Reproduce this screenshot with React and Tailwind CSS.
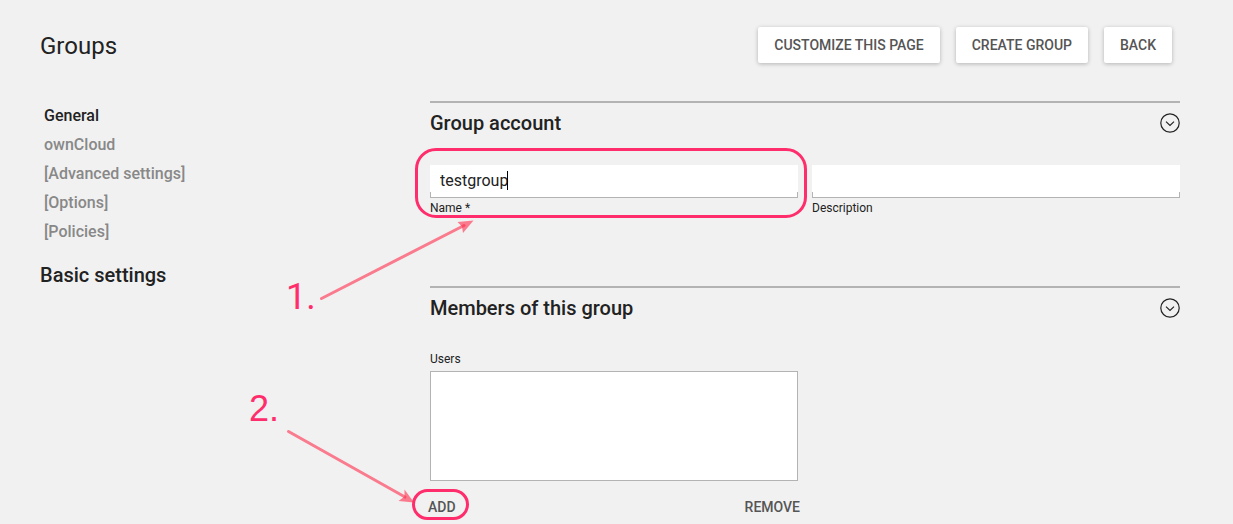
const navItems = ['General', 'ownCloud', '[Advanced settings]', '[Options]', '[Policies]'];

function HeaderButton({ children }) {
  return (
    <button
      type="button"
      className="h-9 rounded-xs bg-white px-4 text-sm font-medium whitespace-nowrap text-[#555555] uppercase shadow-[0_1px_4px_rgba(0,0,0,0.26)]"
    >
      {children}
    </button>
  );
}

function Section({ title, children }) {
  return (
    <section className="border-t-2 border-[#b3b3b3]">
      <div className="flex h-10 items-center justify-between">
        <h2 className="text-xl font-medium">{title}</h2>
        <button type="button" aria-label={`Collapse ${title}`} className="size-5">
          <svg viewBox="0 0 20 20" className="size-5" fill="none" stroke="#222222" strokeWidth="1.2">
            <circle cx="10" cy="10" r="9.2" />
            <path d="M6 8.6 10 12.4 14 8.6" />
          </svg>
        </button>
      </div>
      <div className="mt-[22px]">{children}</div>
    </section>
  );
}

function TextField({ id, label, defaultValue, caret, highlighted }) {
  return (
    <div className="relative flex min-w-0 flex-1 flex-col">
      <div className="relative after:pointer-events-none after:absolute after:inset-x-0 after:bottom-0 after:h-1.5 after:border-x after:border-b after:border-[#b3b3b3]">
        <input
          id={id}
          type="text"
          defaultValue={defaultValue}
          className="block h-[33px] w-full bg-white px-2.5 pb-0.5 text-base outline-none"
        />
        {caret && <span className="absolute top-1.5 left-[77px] h-[19px] w-px bg-black" />}
      </div>
      <label htmlFor={id} className="mt-px text-xs leading-[18px]">
        {label}
      </label>
      {highlighted && (
        <span className="pointer-events-none absolute -top-[17px] -right-[9px] -bottom-px -left-[15px] rounded-[21px] border-3 border-[#ff2d6b]" />
      )}
    </div>
  );
}

function Annotations() {
  return (
    <div className="pointer-events-none absolute inset-0 overflow-hidden text-4xl leading-10 text-[#ff2d6b]">
      <span className="absolute top-[277px] left-[286px]">1.</span>
      <span className="absolute top-[389px] left-[249px] [font-family:Liberation_Sans,Arial,sans-serif]">2.</span>
      <svg width="500" height="524" className="absolute top-0 left-0" fill="none">
        <g stroke="#ff2d4b" strokeOpacity="0.6" strokeWidth="3" strokeLinecap="round">
          <path d="M321.5 298.5 464 225.5" />
          <path d="M288.5 431.5 405 497" />
        </g>
        <g fill="#ff2d4b" fillOpacity="0.6">
          <path d="M473.5 220.5 457.5 222 462 226.5 463 233Z" />
          <path d="M414 502.5 404.5 489.5 404.5 496.5 398.5 501Z" />
        </g>
      </svg>
    </div>
  );
}

export default function App() {
  return (
    <div className="relative min-h-screen bg-[#f1f1f1] font-['Roboto',sans-serif] text-[#222222]">
      <header className="flex justify-between pt-[27px] pr-[61px] pl-10">
        <h1 className="text-2xl leading-[38px]">Groups</h1>
        <div className="flex gap-4">
          <HeaderButton>Customize this page</HeaderButton>
          <HeaderButton>Create group</HeaderButton>
          <HeaderButton>Back</HeaderButton>
        </div>
      </header>

      <div className="mt-9 flex pr-[53px] pl-10">
        <aside className="w-[390px] shrink-0">
          <nav className="flex flex-col items-start pl-1 font-medium">
            {navItems.map((item, i) => (
              <a
                key={item}
                href="#"
                className={i === 0 ? 'leading-[29px] text-[#222222]' : 'leading-[29px] text-[#888888]'}
              >
                {item}
              </a>
            ))}
          </nav>
          <h2 className="mt-[15px] text-xl font-medium">Basic settings</h2>
        </aside>

        <main className="flex min-w-0 flex-1 flex-col gap-[69px]">
          <Section title="Group account">
            <div className="flex gap-3.5">
              <TextField id="name" label="Name *" defaultValue="testgroup" caret highlighted />
              <TextField id="description" label="Description" />
            </div>
          </Section>

          <Section title="Members of this group">
            <div className="grid grid-cols-2 gap-3.5">
              <div className="flex flex-col">
                <label htmlFor="users" className="text-xs leading-[18px]">
                  Users
                </label>
                <select
                  id="users"
                  multiple
                  className="mt-[3px] h-[110px] w-full rounded-none border border-[#b3b3b3] bg-white"
                />
                <div className="-mx-0.5 mt-2.5 flex justify-between text-sm font-medium text-[#555555]">
                  <div className="relative">
                    <button type="button" className="h-8">
                      ADD
                    </button>
                    <span className="pointer-events-none absolute -top-0.5 -right-[13px] bottom-[3px] -left-4 rounded-full border-3 border-[#ff2d6b]" />
                  </div>
                  <button type="button" className="h-8">
                    REMOVE
                  </button>
                </div>
              </div>
            </div>
          </Section>
        </main>
      </div>

      <Annotations />
    </div>
  );
}
